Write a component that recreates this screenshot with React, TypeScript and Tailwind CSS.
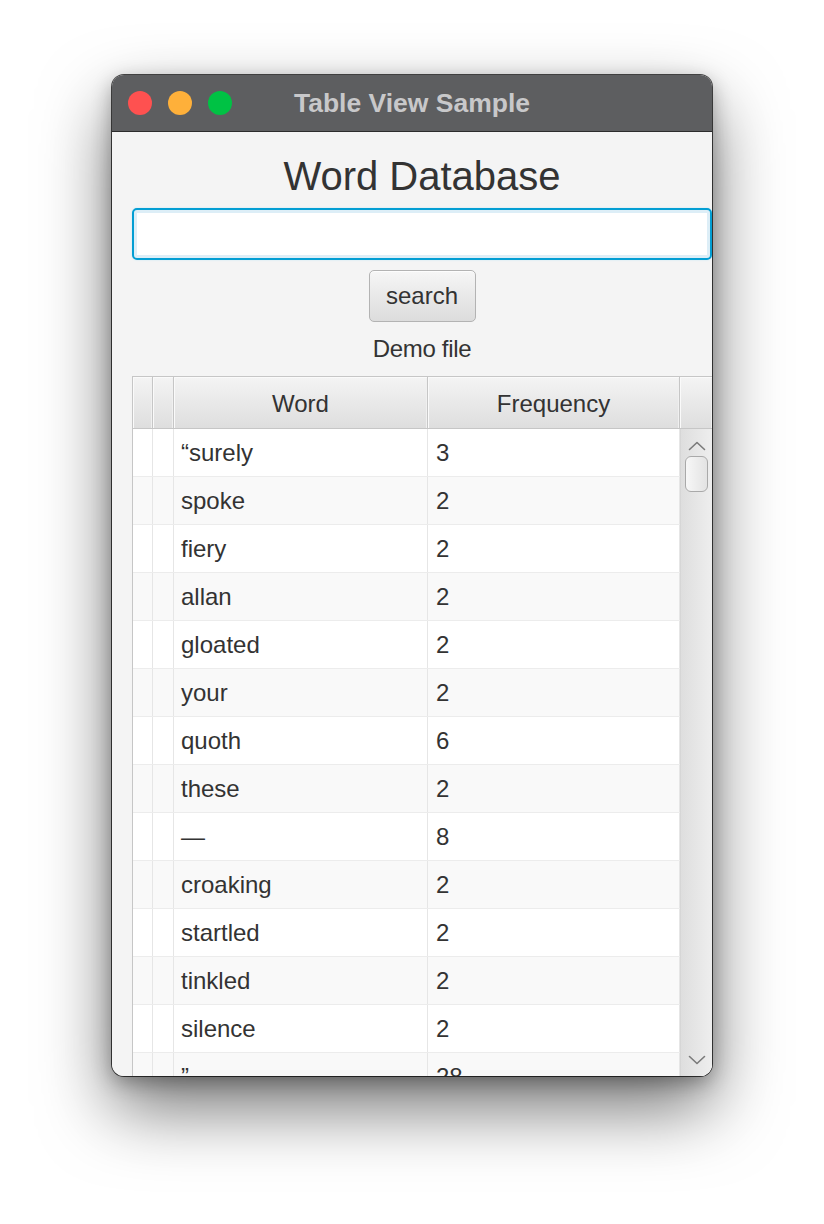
import React from 'react';

const rows: [string, string][] = [
  ['\u201Csurely', '3'],
  ['spoke', '2'],
  ['fiery', '2'],
  ['allan', '2'],
  ['gloated', '2'],
  ['your', '2'],
  ['quoth', '6'],
  ['these', '2'],
  ['\u2014', '8'],
  ['croaking', '2'],
  ['startled', '2'],
  ['tinkled', '2'],
  ['silence', '2'],
  ['\u201D', '28'],
];

const headCell =
  'h-full border-r border-[#c6c6c6] bg-gradient-to-b from-[#f4f4f4] to-[#dedede] shadow-[inset_1px_1px_0_#fafafa,inset_-1px_0_0_#f0f0f0] flex items-center justify-center pt-[3px]';

function Chevron({ up }: { up?: boolean }) {
  return (
    <svg width="18" height="10" viewBox="0 0 18 10" fill="none">
      <polyline
        points={up ? '1.5,8.5 9,1.5 16.5,8.5' : '1.5,1.5 9,8.5 16.5,1.5'}
        stroke="#7a7a7a"
        strokeWidth="1.6"
        strokeLinecap="round"
        strokeLinejoin="round"
      />
    </svg>
  );
}

export default function App() {
  return (
    <div
      className="min-h-screen bg-white pt-[75px] pl-[112px]"
      style={{ fontFamily: '"Liberation Sans", Arial, sans-serif' }}
    >
      <div className="w-[600px] h-[1001px] rounded-[12px] overflow-hidden flex flex-col shadow-[0_0_0_1px_rgba(0,0,0,0.7),0_32px_70px_rgba(0,0,0,0.55),0_6px_20px_rgba(0,0,0,0.3)]">
        {/* title bar */}
        <div className="h-[57px] shrink-0 bg-[#5d5e60] border-b border-[#2c2c2c] grid grid-cols-[1fr_auto_1fr] items-center">
          <div className="flex items-center gap-[16px] pl-[16px]">
            <span className="w-[24px] h-[24px] rounded-full bg-[#fe5150]" />
            <span className="w-[24px] h-[24px] rounded-full bg-[#feb03a]" />
            <span className="w-[24px] h-[24px] rounded-full bg-[#00c244]" />
          </div>
          <div className="text-[26.5px] font-bold text-[#c8c8ca] leading-none">Table View Sample</div>
          <div />
        </div>

        {/* content */}
        <div className="flex-1 bg-[#f4f4f4] overflow-hidden pl-[20px]">
          <div className="w-[580px] flex flex-col items-center">
            <div className="mt-[21px] text-[40px] leading-[46px] text-[#333]">Word Database</div>

            <div className="mt-[9px] w-[580px] h-[52px] rounded-[5px] border-2 border-[#039ed3] bg-white shadow-[inset_0_0_0_3px_#ddeef7,0_0_2px_#bfe3f3]" />

            <button className="mt-[10px] w-[107px] h-[52px] rounded-[5px] border border-[#b3b3b3] bg-gradient-to-b from-[#f6f6f6] to-[#dcdcdc] shadow-[inset_0_1px_0_#fdfdfd] text-[24px] text-[#333]">
              search
            </button>

            <div className="mt-[10px] text-[24px] leading-[34px] text-[#333] tracking-[-0.3px]">Demo file</div>

            {/* table */}
            <div className="mt-[10px] w-[580px] h-[700px] border-l border-t border-[#c6c6c6] flex flex-col bg-white">
              <div className="h-[52px] shrink-0 flex border-b border-[#c6c6c6] text-[24px] text-[#333]">
                <div className={`${headCell} w-[20px]`} />
                <div className={`${headCell} w-[21px]`} />
                <div className={`${headCell} w-[254px]`}>Word</div>
                <div className={`${headCell} w-[252px]`}>Frequency</div>
                <div className={`${headCell} flex-1 border-r-0`} />
              </div>

              <div className="flex-1 flex overflow-hidden">
                <div className="w-[547px] flex flex-col">
                  {rows.map(([w, f], i) => (
                    <div
                      key={i}
                      className={`h-[48px] shrink-0 flex border-b border-[#ececec] text-[24px] text-[#333] ${
                        i % 2 === 1 ? 'bg-[#f9f9f9]' : 'bg-white'
                      }`}
                    >
                      <div className="w-[20px] border-r border-[#e6e6e6]" />
                      <div className="w-[21px] border-r border-[#e6e6e6]" />
                      <div className="w-[254px] border-r border-[#e6e6e6] pl-[7px] flex items-center">{w}</div>
                      <div className="w-[252px] border-r border-[#e6e6e6] pl-[8px] flex items-center">{f}</div>
                    </div>
                  ))}
                </div>

                {/* scrollbar */}
                <div className="w-[32px] h-[647px] bg-gradient-to-r from-[#dedede] to-[#eeeeee] border-l border-[#d6d6d6] flex flex-col items-center">
                  <div className="h-[24px] flex items-end justify-center pb-[2px]">
                    <Chevron up />
                  </div>
                  <div className="mt-[3px] w-[23px] h-[36px] rounded-[6px] border-[1.5px] border-[#a9a9a9] bg-gradient-to-r from-[#f7f7f7] to-[#e3e3e3]" />
                  <div className="flex-1" />
                  <div className="h-[24px] flex items-start justify-center pt-[3px]">
                    <Chevron />
                  </div>
                </div>
              </div>
            </div>
          </div>
        </div>
      </div>
    </div>
  );
}
